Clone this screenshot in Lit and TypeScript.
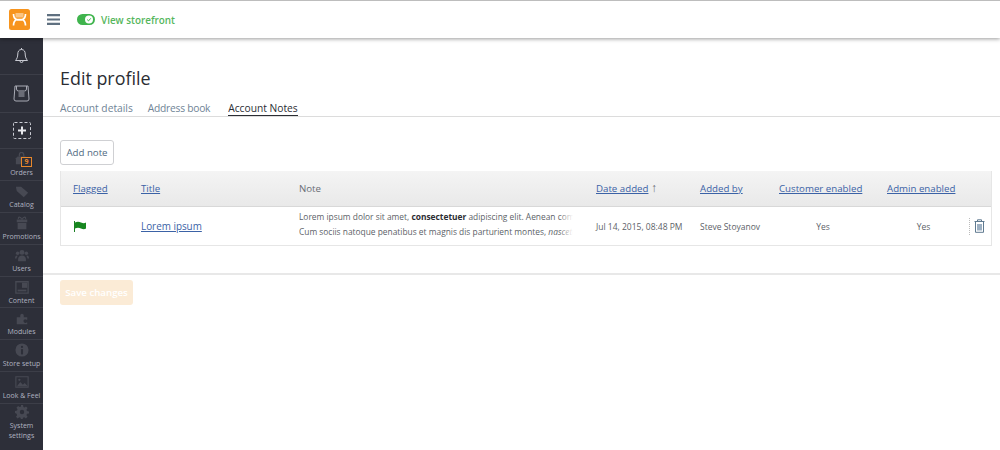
import { LitElement, html, css, svg } from "lit";
import { customElement } from "lit/decorators.js";

const c = "#474953";
const icons: Record<string, unknown> = {
  orders: svg`<path d="M3 5h9l2 2v7H1V7z" fill="${c}"/><path d="M5 5V3a2.500 2.500 0 0 1 5 0v2" fill="none" stroke="${c}" stroke-width="1.500"/>`,
  catalog: svg`<path d="M1 3h6l8 7-5 5-8-7z" fill="${c}"/>`,
  promotions: svg`<path d="M2 4h12v3H2zM3 8h10v7H3z" fill="${c}"/><path d="M8 4C6 0 3 1 4 3.500M8 4c2-4 5-3 4-.5" fill="none" stroke="${c}" stroke-width="1.300"/>`,
  users: svg`<circle cx="8" cy="5" r="2.800" fill="${c}"/><circle cx="3" cy="6" r="2" fill="${c}"/><circle cx="13" cy="6" r="2" fill="${c}"/><path d="M3.500 15v-2.500Q4 8.500 8 8.500t4.500 4V15zM0 12q0-3.500 2.500-3.500L3 9q-1 1-1.200 3zM16 12q0-3.500-2.500-3.500L13 9q1 1 1.200 3z" fill="${c}"/>`,
  content: svg`<path d="M1 2h14v13H1z" fill="none" stroke="${c}" stroke-width="1.500"/><path d="M8 3h6v6H8z" fill="${c}"/><path d="M3 11h10v2H3z" fill="${c}"/>`,
  modules: svg`<path d="M2 7h4V5a2 2 0 1 1 4 0v2h4v3h-1a2 2 0 1 0 0 3h1v2H2z" fill="${c}"/>`,
  store: svg`<circle cx="8" cy="8" r="7.500" fill="${c}"/><circle cx="8" cy="4.500" r="1.300" fill="#2d2f39"/><path d="M6.800 7h2.400v6H6.800z" fill="#2d2f39"/>`,
  look: svg`<path d="M1 2h14v12H1z" fill="none" stroke="${c}" stroke-width="1.300"/><path d="M2 13l4-5 3 3 2-2 4 4z" fill="${c}"/><circle cx="5" cy="5.500" r="1.300" fill="${c}"/>`,
  system: svg`<path fill-rule="evenodd" d="M6.800 0h2.400l.4 2.300 1.500.6L12.500 1.600l1.900 1.900-1.300 1.900.6 1.500 2.300.4v2.400l-2.300.4-.6 1.500 1.300 1.900-1.900 1.900-1.900-1.300-1.500.6-.4 2.300H6.800l-.4-2.300-1.500-.6-1.900 1.300-1.900-1.900 1.300-1.900-.6-1.500L0 9.200V6.800l2.300-.4.6-1.500L1.600 3l1.900-1.900 1.900 1.300 1.500-.6zM8 5.500a2.500 2.500 0 1 0 0 5 2.500 2.500 0 0 0 0-5z" fill="${c}"/>`,
};

const navItems: [string, string, string][] = [
  ["orders", "Orders", "n32"],
  ["catalog", "Catalog", "n32"],
  ["promotions", "Promotions", "n32"],
  ["users", "Users", "n32"],
  ["content", "Content", "n31"],
  ["modules", "Modules", "n32"],
  ["store", "Store setup", "n32"],
  ["look", "Look & Feel", "n32"],
  ["system", "System settings", "nlast"],
];

@customElement("app-root")
export class AppRoot extends LitElement {
  static styles = css`
    :host {
      display: block;
      width: 1000px;
      height: 450px;
      overflow: hidden;
      background: #fff;
      font-family: "Open Sans", "Noto Sans", sans-serif;
      color: #5c5f68;
      position: relative;
    }
    a { color: #3b62a6; text-decoration: underline; }
    .top {
      height: 38px;
      box-sizing: border-box;
      border-top: 1px solid #bdbdbd;
      display: flex;
      align-items: center;
      padding-left: 9px;
      background: #fff;
      box-shadow: 0 1px 4px rgba(0,0,0,.4);
      position: relative;
      z-index: 2;
    }
    .logo { display: block; width: 21px; height: 21px; margin-right: 17px; }
    .burger { display: block; width: 13px; height: 11px; margin-right: 17px; }
    .toggle { display: block; width: 18px; height: 11px; margin-right: 6px; }
    .store { color: #55b65c; font-size: 9.900px; font-weight: 600; }
    .body { display: flex; height: 412px; }
    .side {
      width: 43px;
      flex: none;
      background: #2d2f39;
      display: flex;
      flex-direction: column;
    }
    .ic {
      display: flex;
      align-items: center;
      justify-content: center;
      border-bottom: 1px solid #3c3e48;
      box-sizing: border-box;
    }
    .h37 { height: 37px; }
    .h38 { height: 38px; }
    .h36 { height: 36px; }
    .n {
      display: flex;
      flex-direction: column;
      align-items: center;
      border-bottom: 1px solid #3c3e48;
      box-sizing: border-box;
      padding-top: 3px;
      position: relative;
      color: #b0b3c0;
      font-size: 7px;
      line-height: 10px;
      text-align: center;
      white-space: nowrap;
    }
    .n svg { display: block; width: 14px; height: 14px; margin-bottom: 2px; }
    .n32 { height: 32px; }
    .n31 { height: 31px; }
    .nlast { border-bottom: 0; flex: 1; white-space: normal; padding-top: 1px; }
    .badge {
      position: absolute;
      left: 21px;
      top: 8px;
      width: 11px;
      height: 10px;
      box-sizing: border-box;
      border: 1px solid #e8872b;
      color: #e8872b;
      font-size: 7px;
      font-weight: 700;
      line-height: 8px;
      background: #2d2f39;
    }
    .main { flex: 1; display: flex; flex-direction: column; min-width: 0; }
    h1 {
      margin: 27px 0 0 17px;
      font-size: 17.900px;
      line-height: 26px;
      font-weight: 400;
      color: #2b2d33;
    }
    .tabs {
      display: flex;
      padding: 10px 0 0 17px;
      height: 15px;
      border-bottom: 1px solid #dcdcdc;
      box-sizing: content-box;
      font-size: 10.250px;
      line-height: 15px;
      color: #6f8496;
    }
    .tabs span { height: 14px; box-sizing: content-box; }
    .tabs .addr { margin: 0 18px 0 15px; letter-spacing: -0.25px; }
    .tabs .on { color: #2b2d33; border-bottom: 1px solid #2b2d33; }
    .btn {
      margin: 23px 0 0 17px;
      width: 54px;
      height: 25px;
      box-sizing: border-box;
      border: 1px solid #cfd0d3;
      border-radius: 3px;
      font-size: 9.700px;
      line-height: 23px;
      text-align: center;
      color: #4f6a82;
    }
    .table {
      margin: 6px 8px 0 17px;
      border: 1px solid #e6e6e6;
      border-width: 0 1px 1px 1px;
      font-size: 9.700px;
    }
    .row {
      display: grid;
      grid-template-columns: 68px 158px 297px 104px 79px 108px 81px 1fr;
      align-items: center;
      padding-left: 12px;
    }
    .head {
      height: 36px;
      box-sizing: border-box;
      background: linear-gradient(#f4f4f4, #e9e9e9);
      border-bottom: 1px solid #d8d8d8;
      color: #6a6d75;
    }
    .data { height: 38px; font-size: 8.500px; color: #5c5f68; }
    .data .title { font-size: 9.900px; justify-self: start; }
    .ctr { text-align: center; }
    .y1 { margin-left: -20px; }
    .y2 { margin-left: -8px; }
    .note {
      width: 274px;
      overflow: hidden;
      white-space: nowrap;
      line-height: 15px;
      position: relative;
      font-size: 8.400px;
      top: -2px;
    }
    .note b { color: #2b2d33; }
    .fade {
      position: absolute;
      right: 0;
      top: 0;
      bottom: 0;
      width: 14px;
      background: linear-gradient(90deg, rgba(255,255,255,0), #fff);
    }
    .arrow { font-size: 12px; line-height: 10px; }
    .act { display: flex; align-items: center; border-left: 1px dotted #bbb; height: 17px; padding-left: 4px; margin-left: 1px; }
    .act svg { display: block; width: 11px; height: 14px; }
    .sep { margin-top: 27px; height: 2px; background: #e8e8e8; }
    .save {
      margin: 5px 0 0 17px;
      width: 73px;
      height: 25px;
      border-radius: 3px;
      background: #fbebd6;
      color: #fff;
      font-size: 9.700px;
      font-weight: 600;
      line-height: 25px;
      text-align: center;
    }
  `;

  render() {
    return html`
      <div class="top">
        <svg class="logo" viewBox="0 0 21 21">
          <rect width="21" height="21" rx="2.500" fill="#f7941d"/>
          <path d="M4.500 5q0 4.500 3.200 5.500h5.600Q16.500 9.500 16.500 5M7.700 10.500q-3.200 1.500-3.200 6M13.300 10.500q3.200 1.500 3.200 6M7.700 10.800h5.600" fill="none" stroke="#fff" stroke-width="1.700"/>
          <path d="M6.500 4h8v4.500h-8z" fill="#fff" opacity=".45"/>
        </svg>
        <svg class="burger" viewBox="0 0 13 11"><path d="M0 0h13v2.200H0zM0 4.400h13v2.200H0zM0 8.800h13V11H0z" fill="#5f7080"/></svg>
        <svg class="toggle" viewBox="0 0 18 11">
          <rect width="18" height="11" rx="5.500" fill="#3fb44d"/>
          <circle cx="12" cy="5.500" r="4" fill="#fff"/>
          <path d="M10.200 5.600l1.300 1.300 2.300-2.600" fill="none" stroke="#3fb44d" stroke-width="1"/>
        </svg>
        <span class="store">View storefront</span>
      </div>
      <div class="body">
        <nav class="side">
          <div class="ic h37">
            <svg width="13" height="16" viewBox="0 0 13 16"><path d="M6.500 1.500c-2.800 0-3.700 2.300-3.700 4.500 0 3-1 5-2.300 6.500h12c-1.300-1.500-2.300-3.500-2.300-6.500 0-2.200-.9-4.500-3.700-4.500zM5 13a1.500 1.500 0 0 0 3 0M6.500 0v1.500" fill="none" stroke="#c9cbd3" stroke-width="1"/></svg>
          </div>
          <div class="ic h38">
            <svg width="17" height="17" viewBox="0 0 17 17"><path d="M2 1h13l1 13q0 2-2 2H3q-2 0-2-2z" fill="none" stroke="#a9abb5"/><path d="M3.500 1v3q0 2 2 2h6q2 0 2-2V1" fill="none" stroke="#a9abb5"/><path d="M5.500 7h6v5h-6z" fill="#6a6c76"/></svg>
          </div>
          <div class="ic h36">
            <svg width="18" height="17" viewBox="0 0 18 17"><rect x=".5" y=".5" width="17" height="16" rx="1" fill="none" stroke="#c9cbd3" stroke-dasharray="3 2"/><path d="M8 4.500h2v3h3v2h-3v3H8v-3H5v-2h3z" fill="#e6e7ec"/></svg>
          </div>
          ${navItems.map(
            ([k, label, cls]) => html`<div class="n ${cls}">
              <svg viewBox="0 0 16 16">${icons[k]}</svg>
              ${label}
              ${k === "orders" ? html`<span class="badge">9</span>` : ""}
            </div>`
          )}
        </nav>
        <main class="main">
          <h1>Edit profile</h1>
          <div class="tabs">
            <span>Account details</span><span class="addr">Address book</span><span class="on">Account Notes</span>
          </div>
          <div class="btn">Add note</div>
          <div class="table">
            <div class="row head">
              <span><a href="#">Flagged</a></span><span><a href="#">Title</a></span><span>Note</span>
              <span><a href="#">Date added</a> <span class="arrow">↑</span></span>
              <span><a href="#">Added by</a></span><span><a href="#">Customer enabled</a></span><span><a href="#">Admin enabled</a></span><span></span>
            </div>
            <div class="row data">
              <svg width="14" height="11" viewBox="0 0 14 11"><path d="M1 0h1v11H1z" fill="#1b7f24"/><path d="M2 1.500q3-1.500 6 0t5 0v6q-2 1.500-5 0t-6 0z" fill="#16861f"/></svg>
              <a class="title" href="#">Lorem ipsum</a>
              <div class="note">
                Lorem ipsum dolor sit amet, <b>consectetuer</b> adipiscing elit. Aenean commodo<br />
                Cum sociis natoque penatibus et magnis dis parturient montes, <i>nascetur</i>
                <span class="fade"></span>
              </div>
              <span>Jul 14, 2015, 08:48 PM</span>
              <span>Steve Stoyanov</span>
              <span class="ctr y1">Yes</span>
              <span class="ctr y2">Yes</span>
              <div class="act">
                <svg viewBox="0 0 11 14"><path d="M.5 2.500h10M3.500 2.500V.8h4v1.700M1.500 2.500V13.300h8V2.500" fill="none" stroke="#5f7a90"/><path d="M3 5h5v6.500H3z" fill="#9db0c2"/></svg>
              </div>
            </div>
          </div>
          <div class="sep"></div>
          <div class="save">Save changes</div>
        </main>
      </div>
    `;
  }
}
